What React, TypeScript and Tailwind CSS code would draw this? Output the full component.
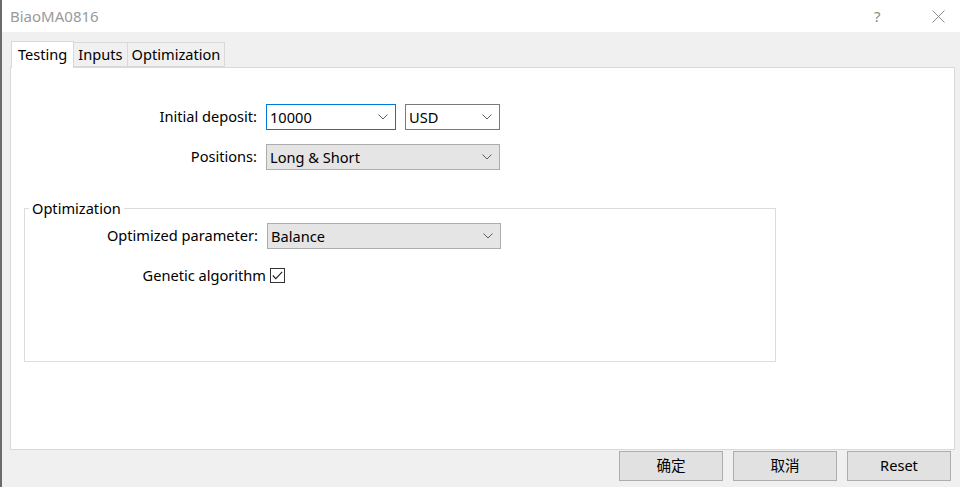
import React from 'react'

const FONT = "font-['Noto_Sans','Noto_Sans_CJK_SC',sans-serif]"

// ─── Small drawings ───────────────────────────────────────────────────────────

function Chevron() {
  return (
    <svg width="10" height="6" viewBox="0 0 10 6" fill="none" aria-hidden="true">
      <path d="M0.5 0.5L5 5L9.5 0.5" stroke="#5f5f5f" strokeWidth="1" />
    </svg>
  )
}

function CloseGlyph() {
  return (
    <svg width="13" height="13" viewBox="0 0 13 13" fill="none" aria-hidden="true">
      <path d="M0.5 0.5L12.5 12.5M12.5 0.5L0.5 12.5" stroke="#8a8a8a" strokeWidth="1" />
    </svg>
  )
}

function CheckBox() {
  return (
    <div className="w-[15px] h-[15px] border border-[#333] bg-white flex items-center justify-center">
      <svg width="11" height="9" viewBox="0 0 11 9" fill="none" aria-hidden="true">
        <path d="M0.8 4.5L3.8 7.6L10.2 0.8" stroke="#222" strokeWidth="1.1" />
      </svg>
    </div>
  )
}

// ─── Controls ─────────────────────────────────────────────────────────────────

type ComboKind = 'focus' | 'edit' | 'list'

function Combo({ value, width, kind }: { value: string; width: string; kind: ComboKind }) {
  const look =
    kind === 'focus'
      ? 'bg-white border-[#0078d7]'
      : kind === 'edit'
        ? 'bg-white border-[#7a7a7a]'
        : 'bg-[#e5e5e5] border-[#adadad]'
  return (
    <div className={`${width} h-[26px] border ${look} flex items-center pl-[3px] pr-[7px]`}>
      <span className="flex-1 text-[14.6px] text-black leading-none">{value}</span>
      <Chevron />
    </div>
  )
}

function Row({ label, labelW, children }: { label: string; labelW: string; children: React.ReactNode }) {
  return (
    <div className="flex items-center gap-[9px]">
      <span className={`${labelW} text-right text-[14.6px] text-black`}>{label}</span>
      {children}
    </div>
  )
}

function Tab({ label, active }: { label: string; active?: boolean }) {
  return active ? (
    <div className="h-[27px] px-[6px] bg-white border border-b-0 border-[#d9d9d9] flex items-center text-[14.6px] text-black relative z-10 -mb-px">
      {label}
    </div>
  ) : (
    <div className="h-[25px] px-[4px] bg-[#f0f0f0] border border-l-0 border-[#d9d9d9] flex items-center text-[14.6px] text-black">
      {label}
    </div>
  )
}

function Button({ label }: { label: string }) {
  return (
    <div className="w-[104px] h-[30px] bg-[#e1e1e1] border border-[#adadad] flex items-center justify-center text-[14.6px] text-black">
      {label}
    </div>
  )
}

// ─── Dialog ───────────────────────────────────────────────────────────────────

export default function App() {
  return (
    <div className={`${FONT} w-[960px] h-[487px] bg-[#f0f0f0] flex flex-col overflow-hidden border-l-2 border-[#6b6b6b]`}>

      {/* Title bar */}
      <div className="h-[32px] bg-white flex items-center shrink-0">
        <span className="pl-[8px] flex-1 text-[15px] text-[#9a9a9a]">BiaoMA0816</span>
        <span className="w-[16px] text-[15px] text-[#8a8a8a] mr-[42px]">?</span>
        <span className="mr-[15px] flex items-center"><CloseGlyph /></span>
      </div>

      {/* Tabs */}
      <div className="pl-[9px] pt-[9px] flex items-end">
        <Tab label="Testing" active />
        <Tab label="Inputs" />
        <Tab label="Optimization" />
      </div>

      {/* Tab page */}
      <div className="ml-[8px] w-[945px] h-[383px] bg-white border border-[#d9d9d9] shrink-0 pt-[36px]">
        <div className="flex flex-col gap-[14px]">
          <Row label="Initial deposit:" labelW="w-[246px]">
            <Combo value="10000" width="w-[130px]" kind="focus" />
            <Combo value="USD" width="w-[95px]" kind="edit" />
          </Row>
          <Row label="Positions:" labelW="w-[246px]">
            <Combo value="Long & Short" width="w-[234px]" kind="list" />
          </Row>
        </div>

        {/* Group box */}
        <div className="relative ml-[13px] mt-[38px] w-[752px] h-[154px] border border-[#dcdcdc] pt-[14px]">
          <span className="absolute -top-[11px] left-[4px] px-[3px] bg-white text-[14.6px] leading-[20px] text-black">
            Optimization
          </span>
          <Row label="Optimized parameter:" labelW="w-[233px]">
            <Combo value="Balance" width="w-[234px]" kind="list" />
          </Row>
          <div className="flex items-center gap-[4px] mt-[16px]">
            <span className="w-[241px] text-right text-[14.6px] text-black">Genetic algorithm</span>
            <CheckBox />
          </div>
        </div>
      </div>

      {/* Buttons */}
      <div className="flex justify-end gap-[10px] pr-[9px] pt-px">
        <Button label="确定" />
        <Button label="取消" />
        <Button label="Reset" />
      </div>
    </div>
  )
}
